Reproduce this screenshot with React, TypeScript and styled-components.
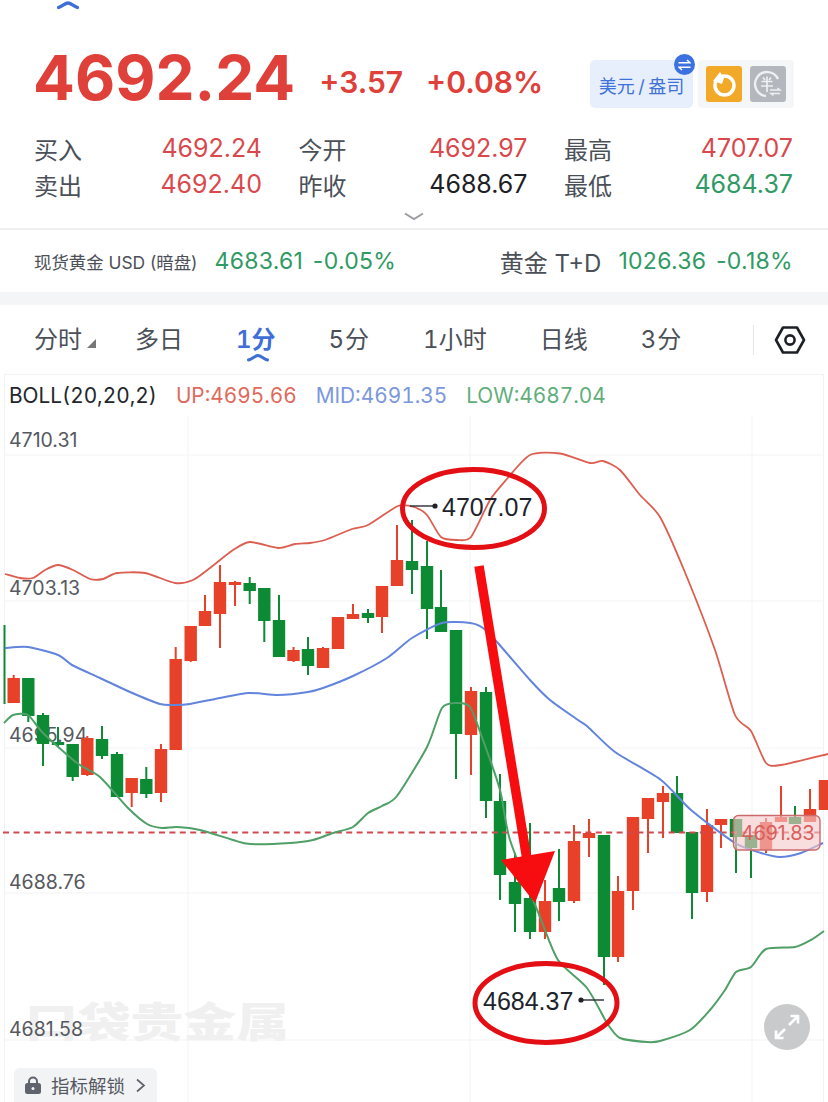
import React from "react";
import styled, { createGlobalStyle } from "styled-components";

const UI = `Inter, "Noto Sans CJK SC", sans-serif`;
const RED = "#d9484c";
const GREEN = "#2f9a63";
const GRAY = "#4b5058";

const Global = createGlobalStyle`
  html, body { margin: 0; padding: 0; background: #fff; }
  body { font-family: ${UI}; }
  * { box-sizing: border-box; }
`;

const Page = styled.div`
  width: 828px;
  height: 1102px;
  overflow: hidden;
  background: #fff;
  display: flex;
  flex-direction: column;
`;

const TopMark = styled.div`
  height: 52px;
  padding-left: 57px;
  color: #3f6fd6;
  line-height: 0;
  svg { display: block; }
`;

const QuoteRow = styled.div`
  height: 52px;
  padding: 0 34px 0 35px;
  display: flex;
  align-items: center;
`;

const BigPrice = styled.div`
  font-size: 62px;
  font-weight: 700;
  color: #e0403a;
  line-height: 52px;
  margin-left: -2px;
  margin-right: 24px;
`;

const Change = styled.div`
  font-size: 30px;
  font-weight: 600;
  color: #e0403a;
  margin-right: 23px;
  padding-top: 8px;
`;

const Tools = styled.div`
  margin-left: auto;
  display: flex;
  gap: 5px;
  align-self: flex-start;
  margin-top: 8px;
`;

const UnitChip = styled.div`
  position: relative;
  width: 103px;
  height: 48px;
  border-radius: 5px;
  background: #e8effc;
  color: #3f73d8;
  font-size: 18px;
  word-spacing: -1.5px;
  display: flex;
  align-items: center;
  justify-content: center;
  padding-top: 2px;
`;

const SwapBadge = styled.div`
  position: absolute;
  top: -6px;
  right: -2px;
  width: 21px;
  height: 21px;
  border-radius: 50%;
  background: #3b72e0;
  display: flex;
  align-items: center;
  justify-content: center;
`;

const IconTray = styled.div`
  width: 96px;
  height: 48px;
  background: #f5f6f8;
  border-radius: 4px;
  display: flex;
  align-items: center;
  justify-content: center;
  gap: 8px;
`;

const IconTile = styled.div<{ $bg: string }>`
  width: 36px;
  height: 36px;
  border-radius: 3px;
  background: ${(p) => p.$bg};
  display: flex;
  align-items: center;
  justify-content: center;
`;

const StatGrid = styled.div`
  margin-top: 26px;
  padding: 0 35px;
  display: grid;
  grid-template-columns: 227px 228px 228px;
  column-gap: 37.5px;
`;

const Stat = styled.div`
  height: 36px;
  display: flex;
  align-items: center;
  justify-content: space-between;
`;

const StatLabel = styled.span`
  font-size: 24px;
  margin-left: -1px;
  color: ${GRAY};
`;

const StatValue = styled.span<{ $c: string }>`
  font-size: 25px;
  color: ${(p) => p.$c};
`;

const FoldRow = styled.div`
  height: 28px;
  display: flex;
  justify-content: center;
  padding-top: 10px;
  border-bottom: 2px solid #eeeff1;
  svg { display: block; }
`;

const TickerRow = styled.div`
  height: 62px;
  padding: 0 35px 0 34px;
  display: flex;
  align-items: center;
  justify-content: space-between;
`;

const Ticker = styled.div`
  display: flex;
  align-items: center;
`;

const TickerName = styled.span<{ $size: number }>`
  font-size: ${(p) => p.$size}px;
  color: ${GRAY};
  white-space: nowrap;
`;

const TickerValue = styled.span`
  font-size: 23px;
  color: ${GREEN};
  margin-left: 17px;
  white-space: pre;
  letter-spacing: 0.3px;
  word-spacing: -2px;
`;

const Band = styled.div`
  height: 13px;
  background: #f4f5f7;
`;

const TabBar = styled.div`
  height: 69px;
  padding: 0 20px 0 34px;
  display: flex;
  align-items: center;
  gap: 53px;
  position: relative;
`;

const Tab = styled.div<{ $active?: boolean; $spaced?: boolean }>`
  position: relative;
  font-size: 24px;
  white-space: nowrap;
  display: flex;
  align-items: center;
  margin-bottom: 4px;
  font-variant-numeric: tabular-nums;
  letter-spacing: ${(p) => (p.$spaced ? "1px" : "0")};
  color: ${(p) => (p.$active ? "#3f6fd6" : GRAY)};
  font-weight: ${(p) => (p.$active ? 600 : 400)};
`;

const Caret = styled.span`
  width: 0;
  height: 0;
  margin-left: 5px;
  margin-right: -14px;
  margin-top: 12px;
  border-left: 9px solid transparent;
  border-bottom: 9px solid #777;
`;

const TabMark = styled.svg`
  position: absolute;
  left: 11px;
  bottom: -7px;
  display: block;
`;

const TabTail = styled.div`
  margin-left: auto;
  display: flex;
  align-items: center;
  gap: 20px;
  margin-right: 2px;
`;

const TabDivider = styled.div`
  width: 1px;
  height: 30px;
  background: #e4e5e7;
`;

const Chart = styled.div`
  position: relative;
  flex: 1;
  display: flex;
  flex-direction: column;
`;

const Frame = styled.div`
  position: absolute;
  left: 4px;
  right: 4px;
  top: 0;
  bottom: 0;
  border: 1px solid #f1f2f3;
  border-bottom: none;
  pointer-events: none;
`;

const Legend = styled.div`
  height: 42px;
  padding-left: 9px;
  display: flex;
  align-items: center;
  gap: 19px;
  font-size: 20.8px;
  font-variant-numeric: tabular-nums;
  flex: none;
`;

const LegendItem = styled.span<{ $c: string }>`
  color: ${(p) => p.$c};
  white-space: nowrap;
`;

const Plot = styled.svg`
  position: relative;
  display: block;
  width: 828px;
  height: 686px;
  flex: none;
`;

const AxisLabel = styled.text`
  font-family: ${UI};
  font-size: 19.5px;
  fill: #55595f;
`;

const UnlockButton = styled.div`
  position: absolute;
  left: 14px;
  bottom: 0;
  width: 143px;
  height: 34px;
  background: #f2f3f5;
  border-radius: 6px 6px 0 0;
  display: flex;
  align-items: center;
  padding-left: 11px;
  gap: 10px;
  color: #555a62;
  font-size: 18.5px;
`;

const ExpandButton = styled.div`
  position: absolute;
  left: 764px;
  top: 630px;
  width: 46px;
  height: 46px;
  border-radius: 50%;
  background: #c9cacb;
  display: flex;
  align-items: center;
  justify-content: center;
`;

type C = [number, number, number, number, number, "r" | "g"];
const candles: C[] = [
  [13.7, 678, 703, 675, 703, "r"],
  [28.3, 678, 716, 678, 722, "g"],
  [43, 715, 744, 713, 766, "g"],
  [58, 742, 745, 727, 747, "g"],
  [72.7, 744, 777, 744, 781, "g"],
  [87.3, 738, 775, 736, 776, "r"],
  [102, 739, 756, 726, 759, "g"],
  [117, 754, 797, 752, 797, "g"],
  [131.7, 778, 793, 778, 807, "r"],
  [146.3, 779, 794, 767, 798, "g"],
  [161, 749, 793, 744, 802, "r"],
  [175.7, 659, 750, 647, 750, "r"],
  [190.7, 626, 661, 626, 662, "r"],
  [205, 611, 626, 595, 626, "r"],
  [220, 582, 614, 565, 648, "r"],
  [235, 582, 585, 581, 606, "r"],
  [249.7, 583, 591, 577, 604, "g"],
  [264.3, 588, 621, 588, 642, "g"],
  [279, 620, 657, 595, 657, "g"],
  [293.5, 650, 661, 647, 662, "r"],
  [308, 649, 666, 637, 675, "g"],
  [323, 648, 668, 647, 668, "r"],
  [338, 617, 649, 617, 649, "r"],
  [353, 614, 619, 604, 619, "r"],
  [368, 613, 618, 609, 623, "g"],
  [382, 586, 617, 586, 633, "r"],
  [397, 560, 586, 525, 586, "r"],
  [412, 561, 570, 520, 594, "g"],
  [427, 566, 609, 541, 639, "g"],
  [441, 607, 632, 570, 632, "g"],
  [456, 630, 734, 630, 779, "g"],
  [471, 691, 735, 687, 775, "r"],
  [486, 692, 801, 687, 818, "g"],
  [500, 801, 875, 774, 900, "g"],
  [515, 882, 904, 853, 932, "g"],
  [530, 898, 932, 823, 939, "g"],
  [545, 901, 932, 880, 939, "r"],
  [559, 888, 902, 849, 921, "g"],
  [574, 841, 901, 825, 903, "r"],
  [589, 833, 838, 819, 857, "r"],
  [604, 835, 957, 835, 985, "g"],
  [618, 891, 957, 876, 962, "r"],
  [633, 817, 891, 817, 910, "r"],
  [648, 798, 819, 798, 853, "r"],
  [663, 793, 802, 786, 838, "r"],
  [677, 793, 833, 776, 833, "g"],
  [692, 832, 893, 832, 919, "g"],
  [707, 825, 892, 809, 902, "r"],
  [721, 819, 825, 819, 848, "r"],
  [736, 819, 837, 819, 873, "g"],
  [751, 835, 848, 835, 878, "g"],
  [766, 822, 850, 818, 853, "r"],
  [781, 817, 822, 786, 822, "r"],
  [795, 817, 824, 806, 824, "g"],
  [810, 809, 822, 789, 822, "r"],
  [825, 780, 810, 780, 810, "r"],
];

const upLine =
  "5,574 20,578 33,578 45,570 58,565 73,570 90,579 103,579 117,573 145,573 175,583 193,580 210,568 233,550 250,542 278,548 295,544 310,543 325,540 352,529 368,525 398,506 414,507 427,515 441,537 457,540 471,537 490,500 506,480 530,455 560,453.5 590,463 603,461 620,470 640,495 660,517 684,570 715,650 735,715 751,731 766,763 781,765 828,754";
const midLine =
  "5,648 28,647 58,655 72,665 100,678 130,692 160,704 175,705 190,704 220,698 249,693 278,695 308,692 323,688 353,676 387,658 412,638 442,623 470,623 483,628 497,642 530,680 550,700 578,720 588,727 615,752 661,780 691,810 735,843 761,853 780,857 801,853 823,843";
const lowLine =
  "4,723 13,715 28,715 43,733 77,763 100,777 127,807 147,824 162,828 177,827 200,830 233,840 250,844 290,843 313,840 333,833 353,827 368,813 382,806 397,796 427,747 442,708 457,703 470,707 483,740 500,790 510,840 540,917 558,960 587,988 607,1023 620,1038 647,1042 660,1041 690,1030 710,1010 725,990 736,972 751,967 766,949 795,947 811,940 824,931";

// Rounds the corners of a polyline with a light Catmull-Rom spline.
function smooth(points: string): string {
  const p = points.split(" ").map((s) => s.split(",").map(Number));
  let d = `M${p[0][0]} ${p[0][1]}`;
  for (let i = 0; i < p.length - 1; i++) {
    const a = p[Math.max(i - 1, 0)];
    const b = p[i];
    const c = p[i + 1];
    const e = p[Math.min(i + 2, p.length - 1)];
    const k = 0.12;
    d += ` C${b[0] + (c[0] - a[0]) * k} ${b[1] + (c[1] - a[1]) * k} ${c[0] - (e[0] - b[0]) * k} ${c[1] - (e[1] - b[1]) * k} ${c[0]} ${c[1]}`;
  }
  return d;
}

const axis: [string, number][] = [
  ["4710.31", 440],
  ["4703.13", 588],
  ["4695.94", 735],
  ["4688.76", 882],
  ["4681.58", 1029],
];

const tabs = ["多日", "1分", "5分", "1小时", "日线", "3分"];

export default function App() {
  return (
    <Page>
      <Global />
      <TopMark>
        <svg width="22" height="10" viewBox="0 0 22 10">
          <path d="M1.5 7.5 C6 6 8 3 11 3 C14 3 16 6 20.5 7.5" fill="none" stroke="currentColor" strokeWidth="3.4" strokeLinecap="round" />
        </svg>
      </TopMark>
      <QuoteRow>
        <BigPrice>4692.24</BigPrice>
        <Change>+3.57</Change>
        <Change>+0.08%</Change>
        <Tools>
          <UnitChip>
            美元 / 盎司
            <SwapBadge>
              <svg width="13" height="12" viewBox="0 0 13 12" fill="none" stroke="#fff" strokeWidth="1.5">
                <path d="M0.5 3.8 H12 L9 1" />
                <path d="M12.5 8.2 H1 L4 11" />
              </svg>
            </SwapBadge>
          </UnitChip>
          <IconTray>
            <IconTile $bg="#f2a928">
              <svg width="30" height="30" viewBox="0 0 30 30" fill="none">
                <circle cx="15.5" cy="16.5" r="9.5" stroke="#fff" strokeWidth="3.5" />
                <path d="M4 12 L11 3 L15 9 L13 15 Z" fill="#fff" />
              </svg>
            </IconTile>
            <IconTile $bg="#b4b7bd">
              <svg width="30" height="30" viewBox="0 0 30 30" fill="none" stroke="#eef0f2">
                <path d="M25 10 A12 12 0 1 0 13 27" strokeWidth="2.4" />
                <path d="M10 8.5 L12 11 M18 8.5 L16 11 M8.5 12.5 H19.5 M8 17 H20 M14 7.5 V23" strokeWidth="1.7" />
                <path d="M17 21 H27 L24.5 19 M27 24.5 H18 L20.5 26.5" strokeWidth="1.5" />
              </svg>
            </IconTile>
          </IconTray>
        </Tools>
      </QuoteRow>
      <StatGrid>
        <Stat><StatLabel>买入</StatLabel><StatValue $c={RED}>4692.24</StatValue></Stat>
        <Stat><StatLabel>今开</StatLabel><StatValue $c={RED}>4692.97</StatValue></Stat>
        <Stat><StatLabel>最高</StatLabel><StatValue $c={RED}>4707.07</StatValue></Stat>
        <Stat><StatLabel>卖出</StatLabel><StatValue $c={RED}>4692.40</StatValue></Stat>
        <Stat><StatLabel>昨收</StatLabel><StatValue $c="#1d2025">4688.67</StatValue></Stat>
        <Stat><StatLabel>最低</StatLabel><StatValue $c={GREEN}>4684.37</StatValue></Stat>
      </StatGrid>
      <FoldRow>
        <svg width="20" height="9" viewBox="0 0 20 9">
          <path d="M1 1.5 L10 7 L19 1.5" fill="none" stroke="#9a9da2" strokeWidth="2" />
        </svg>
      </FoldRow>
      <TickerRow>
        <Ticker>
          <TickerName $size={17.4}>现货黄金 USD (暗盘)</TickerName>
          <TickerValue>4683.61  -0.05%</TickerValue>
        </Ticker>
        <Ticker>
          <TickerName $size={24}>黄金 T+D</TickerName>
          <TickerValue>1026.36  -0.18%</TickerValue>
        </Ticker>
      </TickerRow>
      <Band />
      <TabBar>
        <Tab>分时<Caret /></Tab>
        {tabs.map((t) => (
          <Tab key={t} $active={t === "1分"} $spaced={t === "5分" || t === "3分"}>
            {t}
            {t === "1分" && (
              <TabMark width="22" height="9" viewBox="0 0 22 9">
                <path d="M1.5 7 C6 5.5 8 2.5 11 2.5 C14 2.5 16 5.5 20.5 7" fill="none" stroke="#3f6fd6" strokeWidth="3" strokeLinecap="round" />
              </TabMark>
            )}
          </Tab>
        ))}
        <TabTail>
          <TabDivider />
          <svg width="32" height="28" viewBox="0 0 32 28" fill="none" stroke="#1d2025" strokeWidth="2.6">
            <path d="M9 1.5 H23 L30 14 L23 26.5 H9 L2 14 Z" strokeLinejoin="round" />
            <circle cx="16" cy="14" r="4.6" />
          </svg>
        </TabTail>
      </TabBar>
      <Chart>
        <Frame />
        <Legend>
          <LegendItem $c="#23262b">BOLL(20,20,2)</LegendItem>
          <LegendItem $c="#df6a5c">UP:4695.66</LegendItem>
          <LegendItem $c="#7b98de">MID:4691.35</LegendItem>
          <LegendItem $c="#5fae7c">LOW:4687.04</LegendItem>
        </Legend>
        <Plot viewBox="0 416 828 686">
          <g stroke="#f3f3f4" strokeWidth="1">
            {[455, 601, 748, 893, 1040].map((y) => (
              <line key={y} x1="4" x2="824" y1={y} y2={y} />
            ))}
            {[188, 470, 752].map((x) => (
              <line key={x} x1={x} x2={x} y1="416" y2="1102" />
            ))}
          </g>
          <g transform="translate(25 1037) scale(1.2 0.92)">
            <text fontFamily={`"Noto Sans CJK SC", sans-serif`} fontSize="44" fontWeight="900" fill="#f0f0f1">口袋贵金属</text>
          </g>
          <line x1="4.5" x2="4.5" y1="625" y2="704" stroke="#0c8a34" strokeWidth="2" />
          {axis.map(([t, y]) => (
            <AxisLabel key={t} x="9" y={y + 7}>{t}</AxisLabel>
          ))}
          {candles.map(([x, t, b, wt, wb, c], i) => {
            const col = c === "r" ? "#e8412a" : "#0c8a34";
            return (
              <g key={i} fill={col}>
                <rect x={x - 1} y={wt} width="2" height={wb - wt} />
                <rect x={x - 6.2} y={t} width="12.4" height={Math.max(b - t, 2)} />
              </g>
            );
          })}
          <line x1="3" x2="824" y1="832.5" y2="832.5" stroke="#cf4a50" strokeWidth="2" strokeDasharray="6 4.4" />
          <g fill="none" strokeLinejoin="round">
            <path d={smooth(upLine)} stroke="#dc5e50" strokeWidth="1.8" />
            <path d={smooth(midLine)} stroke="#6384dc" strokeWidth="2" />
            <path d={smooth(lowLine)} stroke="#4f9f66" strokeWidth="2" />
          </g>
          <rect x="733.5" y="815.5" width="86.5" height="34.5" rx="5" fill="#f3c9c9" fillOpacity="0.62" stroke="#cc6b6b" strokeWidth="1.4" />
          <text x="741" y="839.5" fontFamily={UI} fontSize="20" fill="#d9605c" letterSpacing="-0.4">4691.83</text>
          <g stroke="#2a2d33" strokeWidth="1.4" fill="#1f2227">
            <line x1="410" x2="435" y1="506" y2="506" />
            <circle cx="435" cy="506" r="2.6" stroke="none" />
            <line x1="581" x2="604" y1="1000" y2="1000" />
            <circle cx="581" cy="1000" r="2.6" stroke="none" />
          </g>
          <text x="442" y="516" fontFamily={`"Liberation Sans", sans-serif`} fontSize="25" fill="#20232b">4707.07</text>
          <text x="483" y="1010" fontFamily={`"Liberation Sans", sans-serif`} fontSize="25" fill="#20232b">4684.37</text>
          <ellipse cx="473.5" cy="508.5" rx="71" ry="39" fill="none" stroke="#e30f14" strokeWidth="5" />
          <ellipse cx="546" cy="1003" rx="71" ry="39.5" fill="none" stroke="#e30f14" strokeWidth="5" />
          <line x1="479" y1="566" x2="528" y2="866" stroke="#f70d10" strokeWidth="9.5" />
          <polygon points="501,860 555,851 535,903" fill="#f70d10" />
        </Plot>
        <UnlockButton>
          <svg width="16" height="18" viewBox="0 0 16 18">
            <path d="M4 8 V5.5 A4 4 0 0 1 12 5.5 V8" fill="none" stroke="#5f646c" strokeWidth="2" />
            <rect x="0" y="7" width="16" height="11" rx="2.5" fill="#5f646c" />
            <circle cx="8" cy="12.5" r="1.5" fill="#f2f3f5" />
          </svg>
          指标解锁
          <svg width="11" height="15" viewBox="0 0 11 15">
            <path d="M2 1.5 L9 7.5 L2 13.5" fill="none" stroke="#5f646c" strokeWidth="1.7" />
          </svg>
        </UnlockButton>
        <ExpandButton>
          <svg width="28" height="28" viewBox="0 0 28 28" fill="none" stroke="#fff" strokeWidth="2.6">
            <path d="M16 12 L25 3 M17.5 3 H25 V10.5" />
            <path d="M12 16 L3 25 M3 17.5 V25 H10.5" />
          </svg>
        </ExpandButton>
      </Chart>
    </Page>
  );
}
